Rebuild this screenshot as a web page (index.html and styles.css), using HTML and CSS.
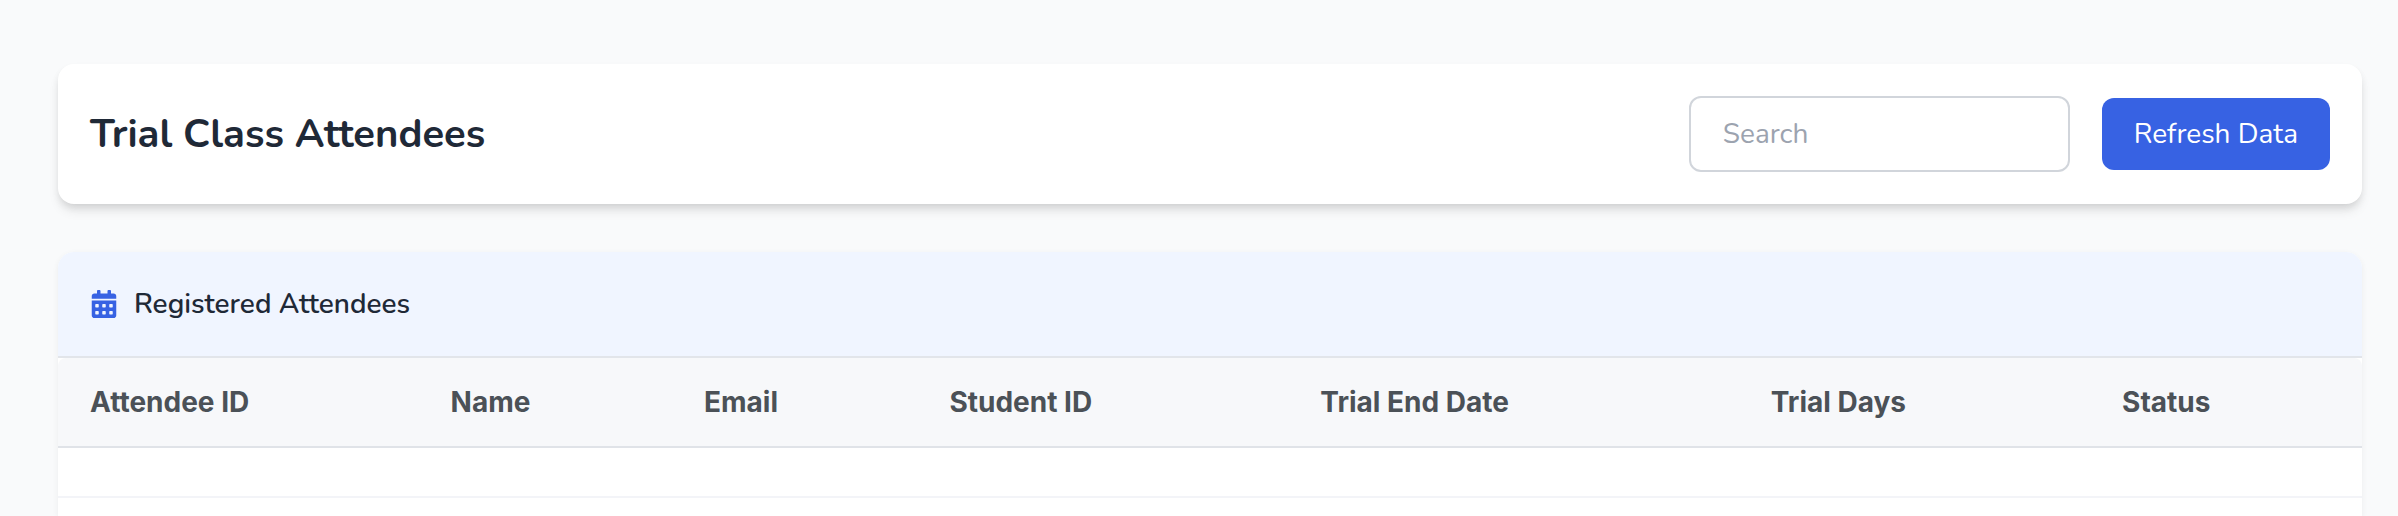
FILE: index.html
```html
<!DOCTYPE html>
<html lang="en">
<head>
    <meta charset="UTF-8">
    <meta name="viewport" content="width=device-width, initial-scale=1.0">
    <title>Trial Class Attendees</title>
    <link rel="stylesheet" href="styles.css">
</head>
<body>
    <main class="page">
        <!-- Page header -->
        <header class="page-header">
            <h1 class="page-title">Trial Class Attendees</h1>
            <div class="actions">
                <input type="text" class="search-input" placeholder="Search" aria-label="Search">
                <button type="button" class="refresh-button">Refresh Data</button>
            </div>
        </header>

        <!-- Attendees table -->
        <section class="card">
            <div class="card-header">
                <svg class="card-icon" viewBox="0 0 448 512" aria-hidden="true">
                    <path d="M0 464c0 26.500 21.500 48 48 48h352c26.500 0 48-21.500 48-48V192H0v272zm320-196c0-6.600 5.400-12 12-12h40c6.600 0 12 5.400 12 12v40c0 6.600-5.400 12-12 12h-40c-6.600 0-12-5.400-12-12v-40zm0 128c0-6.600 5.400-12 12-12h40c6.600 0 12 5.400 12 12v40c0 6.600-5.400 12-12 12h-40c-6.600 0-12-5.400-12-12v-40zM192 268c0-6.600 5.400-12 12-12h40c6.600 0 12 5.400 12 12v40c0 6.600-5.400 12-12 12h-40c-6.600 0-12-5.400-12-12v-40zm0 128c0-6.600 5.400-12 12-12h40c6.600 0 12 5.400 12 12v40c0 6.600-5.400 12-12 12h-40c-6.600 0-12-5.400-12-12v-40zM64 268c0-6.600 5.400-12 12-12h40c6.600 0 12 5.400 12 12v40c0 6.600-5.400 12-12 12H76c-6.600 0-12-5.400-12-12v-40zm0 128c0-6.600 5.400-12 12-12h40c6.600 0 12 5.400 12 12v40c0 6.600-5.400 12-12 12H76c-6.600 0-12-5.400-12-12v-40zM400 64h-48V16c0-8.800-7.200-16-16-16h-32c-8.800 0-16 7.200-16 16v48H160V16c0-8.800-7.200-16-16-16h-32c-8.800 0-16 7.200-16 16v48H48C21.500 64 0 85.500 0 112v48h448v-48c0-26.500-21.500-48-48-48z"/>
                </svg>
                <h2 class="card-title">Registered Attendees</h2>
            </div>
            <table class="attendees">
                <colgroup>
                    <col class="col-id">
                    <col class="col-name">
                    <col class="col-email">
                    <col class="col-student">
                    <col class="col-end">
                    <col class="col-days">
                    <col class="col-status">
                </colgroup>
                <thead>
                    <tr>
                        <th>Attendee ID</th>
                        <th>Name</th>
                        <th>Email</th>
                        <th>Student ID</th>
                        <th>Trial End Date</th>
                        <th>Trial Days</th>
                        <th>Status</th>
                    </tr>
                </thead>
                <tbody>
                    <tr class="spacer-row"><td colspan="7"></td></tr>
                </tbody>
            </table>
        </section>
    </main>
</body>
</html>
```

FILE: styles.css
```css
* {
    box-sizing: border-box;
}
body {
    margin: 0;
    font-family: Nunito, Lato, sans-serif;
    font-size: 28px;
    line-height: 40px;
    color: #1f2937;
    background-color: #f9fafb;
}
.page {
    display: flex;
    flex-direction: column;
    min-height: 100vh;
    padding: 64px 36px 0 58px;
}
.page-header {
    display: flex;
    align-items: center;
    justify-content: space-between;
    padding: 32px;
    margin-bottom: 48px;
    background-color: #fff;
    border-radius: 16px;
    box-shadow: 0 8px 12px -2px rgba(0, 0, 0, 0.1), 0 4px 8px -2px rgba(0, 0, 0, 0.1);
}
.page-title {
    margin: 0;
    font-size: 40px;
    font-weight: 700;
}
.actions {
    display: flex;
    align-items: center;
    gap: 32px;
}
.search-input {
    width: 381px;
    padding: 16px 32px;
    font: inherit;
    color: inherit;
    background-color: #fff;
    border: 2px solid #d1d5db;
    border-radius: 12px;
}
.search-input::placeholder {
    color: #9ca3af;
    opacity: 1;
}
.refresh-button {
    padding: 16px 32px;
    font: inherit;
    color: #fff;
    background-color: #3762e3;
    border: none;
    border-radius: 12px;
    cursor: pointer;
}
.card {
    flex: 1;
    background-color: #fff;
    border-radius: 16px 16px 0 0;
    box-shadow: 0 2px 6px rgba(0, 0, 0, 0.06);
}
.card-header {
    display: flex;
    align-items: center;
    gap: 16px;
    padding: 32px;
    background-color: #f0f5ff;
    border-bottom: 2px solid #e2e5ea;
    border-radius: 16px 16px 0 0;
}
.card-icon {
    width: 28px;
    height: 28px;
    fill: #3762e3;
}
.card-title {
    margin: 0;
    font-size: 28px;
    font-weight: 600;
}
.attendees {
    width: 100%;
    table-layout: fixed;
    border-collapse: separate;
    border-spacing: 0;
    font-family: Inter, sans-serif;
}
.col-id { width: 15.65%; }
.col-name { width: 11%; }
.col-email { width: 10.65%; }
.col-student { width: 16.1%; }
.col-end { width: 19.55%; }
.col-days { width: 15.25%; }
.col-status { width: 11.8%; }
.attendees th {
    padding: 24px 32px;
    font-weight: 700;
    text-align: left;
    color: #4b5157;
    background-color: #f7f8fa;
    border-bottom: 2px solid #e0e3e8;
}
.attendees th:first-child {
    border-top-left-radius: 8px;
}
.attendees th:last-child {
    border-top-right-radius: 8px;
}
.spacer-row td {
    height: 50px;
    padding: 0;
    border-bottom: 2px solid #f3f4f8;
}
```
